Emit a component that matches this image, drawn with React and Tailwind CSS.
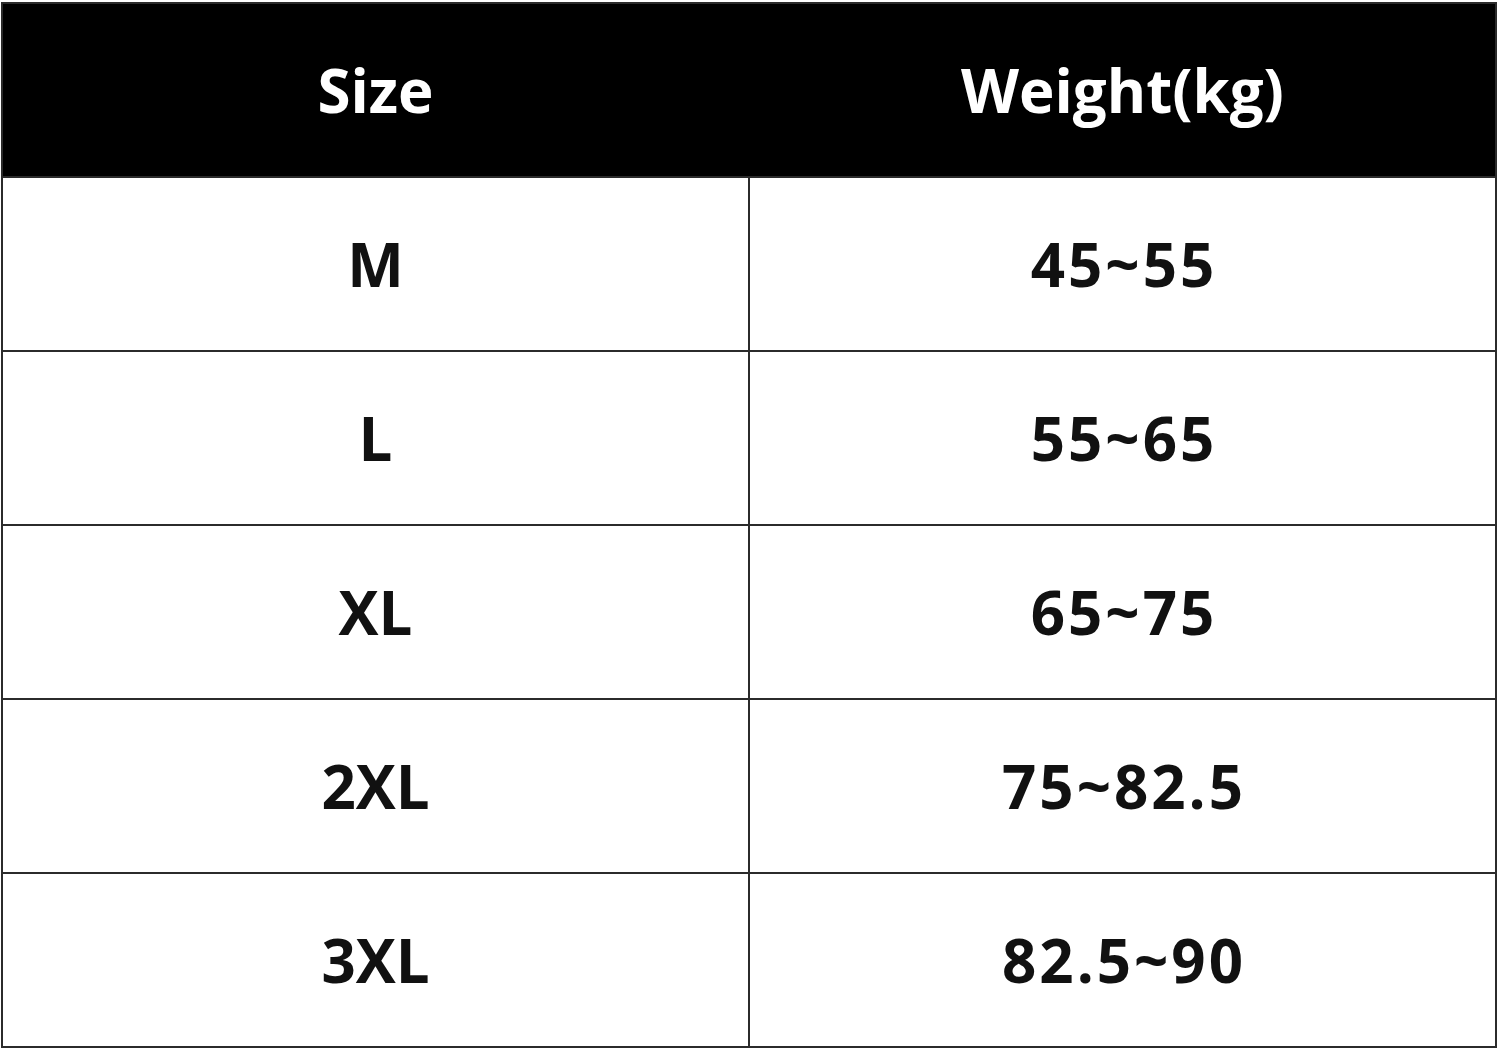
import React from 'react';

const rows = [
    ['M', '45~55'],
    ['L', '55~65'],
    ['XL', '65~75'],
    ['2XL', '75~82.5'],
    ['3XL', '82.5~90'],
];

const App = () => {
    return (
        <div className="w-[1500px] h-[1052px] bg-white pt-[2px] pl-[1px]" style={{ fontFamily: '"Open Sans", "Noto Sans", sans-serif' }}>
            <div className="w-[1496px] border-2 border-[#2b2b2b] flex flex-col">
                <div className="h-[172px] bg-black text-white grid grid-cols-[745px_2px_745px] items-center">
                    <div className="text-center text-[60px] font-bold leading-none">Size</div>
                    <div className="h-full bg-black" />
                    <div className="text-center text-[60px] font-bold leading-none">Weight(kg)</div>
                </div>
                {rows.map(([size, weight]) => (
                    <div key={size} className="h-[174px] border-t-2 border-[#2b2b2b] text-[#111] grid grid-cols-[745px_2px_745px] items-center">
                        <div className="text-center text-[60px] font-bold leading-none">{size}</div>
                        <div className="h-full bg-[#2b2b2b]" />
                        <div className="text-center text-[60px] font-bold leading-none tracking-[3px] pl-[3px]">{weight}</div>
                    </div>
                ))}
            </div>
        </div>
    );
};

export default App;
